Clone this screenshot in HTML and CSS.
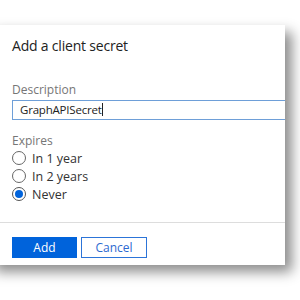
FILE: index.html
```html
<!DOCTYPE html>
<html lang="en">
<head>
    <meta charset="UTF-8">
    <meta name="viewport" content="width=device-width, initial-scale=1.0">
    <title>Add a client secret</title>
    <link rel="stylesheet" href="styles.css">
</head>
<body>
    <div class="dialog">
        <h1 class="dialog-title">Add a client secret</h1>

        <label class="field-label" for="description">Description</label>
        <div class="text-input">GraphAPISecret<span class="caret"></span></div>

        <div class="field-label expires-label">Expires</div>
        <div class="radio-group">
            <div class="radio-row"><span class="radio"></span>In 1 year</div>
            <div class="radio-row"><span class="radio"></span>In 2 years</div>
            <div class="radio-row"><span class="radio checked"></span>Never</div>
        </div>

        <div class="dialog-footer">
            <button class="btn btn-primary">Add</button>
            <button class="btn btn-secondary">Cancel</button>
        </div>
    </div>
</body>
</html>
```

FILE: styles.css
```css
body {
    margin: 0;
    padding: 25px 0 0 0;
    background-color: #fff;
    font-family: "Open Sans", "Noto Sans", sans-serif;
    width: 300px;
    height: 300px;
    overflow: hidden;
    box-sizing: border-box;
}

.dialog {
    width: 273px;
    margin-left: -12px;
    padding-left: 24px;
    background-color: #fff;
    box-shadow: 7px 7px 12px rgba(0, 0, 0, 0.45);
    height: 240px;
    overflow: hidden;
    box-sizing: content-box;
}

.dialog-title {
    margin: 0;
    padding-top: 11px;
    font-size: 14px;
    font-weight: normal;
    color: #222;
    line-height: 20px;
    letter-spacing: -0.2px;
}

.field-label {
    display: block;
    margin-top: 26px;
    font-size: 12px;
    line-height: 16px;
    color: #767676;
}

.text-input {
    margin-top: 2px;
    height: 18px;
    border: 1px solid #6e9fd8;
    border-right: none;
    padding-left: 7px;
    font-size: 11.5px;
    line-height: 18px;
    color: #222;
    letter-spacing: -0.2px;
}

.caret {
    display: inline-block;
    width: 1px;
    height: 13px;
    background-color: #222;
    vertical-align: -2px;
}

.expires-label {
    margin-top: 13px;
}

.radio-group {
    display: flex;
    flex-direction: column;
}

.radio-row {
    display: flex;
    align-items: center;
    gap: 6px;
    height: 18px;
    font-size: 12.5px;
    color: #333;
}

.radio {
    width: 14px;
    height: 14px;
    border: 1px solid #666;
    border-radius: 50%;
    box-sizing: border-box;
    display: flex;
    align-items: center;
    justify-content: center;
}

.radio.checked {
    border-color: #555;
}

.radio.checked::after {
    content: "";
    width: 8px;
    height: 8px;
    border-radius: 50%;
    background-color: #0063db;
}

.dialog-footer {
    margin-top: 19px;
    margin-left: -24px;
    padding: 14px 0 0 24px;
    border-top: 1px solid #ddd;
    display: flex;
    gap: 4px;
}

.btn {
    height: 21px;
    width: 66px;
    font-family: inherit;
    font-size: 12px;
    padding: 0;
    box-sizing: border-box;
}

.btn-primary {
    background-color: #0063db;
    border: 1px solid #0063db;
    color: #fff;
    width: 65px;
}

.btn-secondary {
    background-color: #fff;
    border: 1px solid #2c74d8;
    color: #2c6ad0;
}
```
